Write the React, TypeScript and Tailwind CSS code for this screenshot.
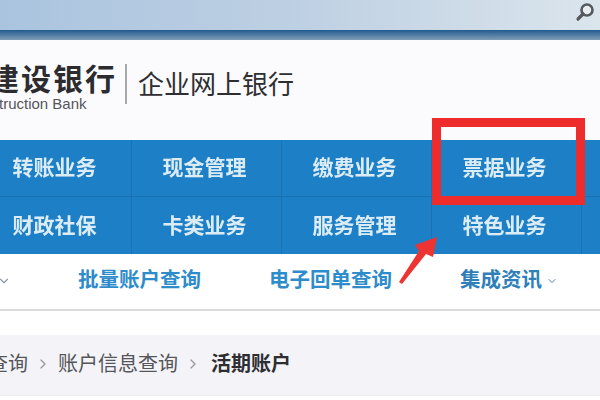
import React from 'react'
import { ChevronDown, ChevronRight } from 'lucide-react'

const cjk = "font-['Liberation_Sans','Noto_Sans_CJK_SC',sans-serif]"

const navRows = [
  ['转账业务', '现金管理', '缴费业务', '票据业务'],
  ['财政社保', '卡类业务', '服务管理', '特色业务'],
]

const NavRow = ({ items, top }: { items: string[]; top?: boolean }) => (
  <div className={`flex h-[57px] -ml-[18px] ${top ? 'border-b border-[#1a6fae]' : ''}`}>
    {items.map((item) => (
      <div
        key={item}
        className="flex w-[150px] shrink-0 items-center justify-center border-r border-[#1a72b3] pr-[4px] text-[21px] font-bold text-[#dcecf7]"
      >
        {item}
      </div>
    ))}
  </div>
)

export default function App() {
  return (
    <div className={`relative h-[400px] w-[600px] overflow-hidden bg-white ${cjk}`}>
      <div className="blur-[0.7px]">
        {/* Browser toolbar */}
        <div className="flex h-[30px] items-center justify-end bg-gradient-to-r from-[#aac4df] via-[#bed0e3] to-[#dbe5ec] pr-[4px]">
          <svg width="22" height="22" viewBox="0 0 22 22" fill="none" className="mb-[6px]">
            <circle cx="13" cy="9" r="5.5" stroke="#55585c" strokeWidth="2.6" fill="#e8edf0" />
            <path d="M9 13 L4 18" stroke="#55585c" strokeWidth="3.2" strokeLinecap="round" />
          </svg>
        </div>
        <div className="h-[10px] bg-gradient-to-b from-[#1f5a8e] to-[#7f9db5]" />

        {/* Logo row */}
        <div className="flex h-[100px] items-center overflow-hidden bg-[#fbfbfd]">
          <div className="-ml-[11px] mt-[-4px] flex w-[126px] shrink-0 flex-col items-start leading-none">
            <div className="whitespace-nowrap text-[30px] font-bold leading-[30px] tracking-[2px] text-[#2c2c30]">建设银行</div>
            <div className="ml-[10px] mt-[2px] whitespace-nowrap text-[15px] leading-[14px] text-[#55555a]">truction Bank</div>
          </div>
          <div className="ml-[10px] mt-[-12px] h-[40px] w-[2px] shrink-0 bg-[#a8a8ac]" />
          <div className="ml-[11px] mt-[-10px] whitespace-nowrap text-[26px] leading-none text-[#2e2e32]">企业网上银行</div>
        </div>

        {/* Main nav */}
        <div className="bg-[#1d80c6]">
          <NavRow items={navRows[0]} top />
          <NavRow items={navRows[1]} />
        </div>

        {/* Sub nav */}
        <div className="flex h-[57px] items-center border-b-2 border-[#dcdce0] bg-white pb-[2px] text-[20.5px] font-bold text-[#2f8ccb]">
          <ChevronDown size={14} className="-ml-[3px] text-[#8a9aa6]" />
          <span className="ml-[67px] whitespace-nowrap">批量账户查询</span>
          <span className="ml-[68px] whitespace-nowrap">电子回单查询</span>
          <span className="ml-[68px] whitespace-nowrap text-[#2f7fb8]">集成资讯</span>
          <ChevronDown size={12} className="ml-[4px] text-[#4f7fa6]" />
        </div>

        {/* Breadcrumb */}
        <div className="h-[24px] bg-white" />
        <div className="flex h-[61px] items-center gap-[5px] overflow-hidden border-b border-[#ececf0] bg-[#f3f3f8] pb-[2px] text-[20px] text-[#55555a]">
          <span className="-ml-[12px] whitespace-nowrap">查询</span>
          <ChevronRight size={16} className="ml-[2px] text-[#9a9a9e]" />
          <span className="ml-[2px] whitespace-nowrap">账户信息查询</span>
          <ChevronRight size={16} className="ml-[2px] text-[#9a9a9e]" />
          <span className="ml-[5px] whitespace-nowrap font-bold text-[#2e2e32]">活期账户</span>
        </div>
        <div className="h-[18px] bg-white" />
      </div>

      {/* Red annotations over the page */}
      <div className="absolute left-[432px] top-[118px] h-[87px] w-[153px] border-[9px] border-[#ee2c2c] blur-[0.4px]" />
      <svg className="absolute left-[395px] top-[232px] blur-[0.4px]" width="50" height="58" viewBox="0 0 50 58">
        <path d="M4 50 L24 19 L20 13 L42 5 L38 25 L31 22 L7 52 Z" fill="#ee3333" />
      </svg>
    </div>
  )
}
